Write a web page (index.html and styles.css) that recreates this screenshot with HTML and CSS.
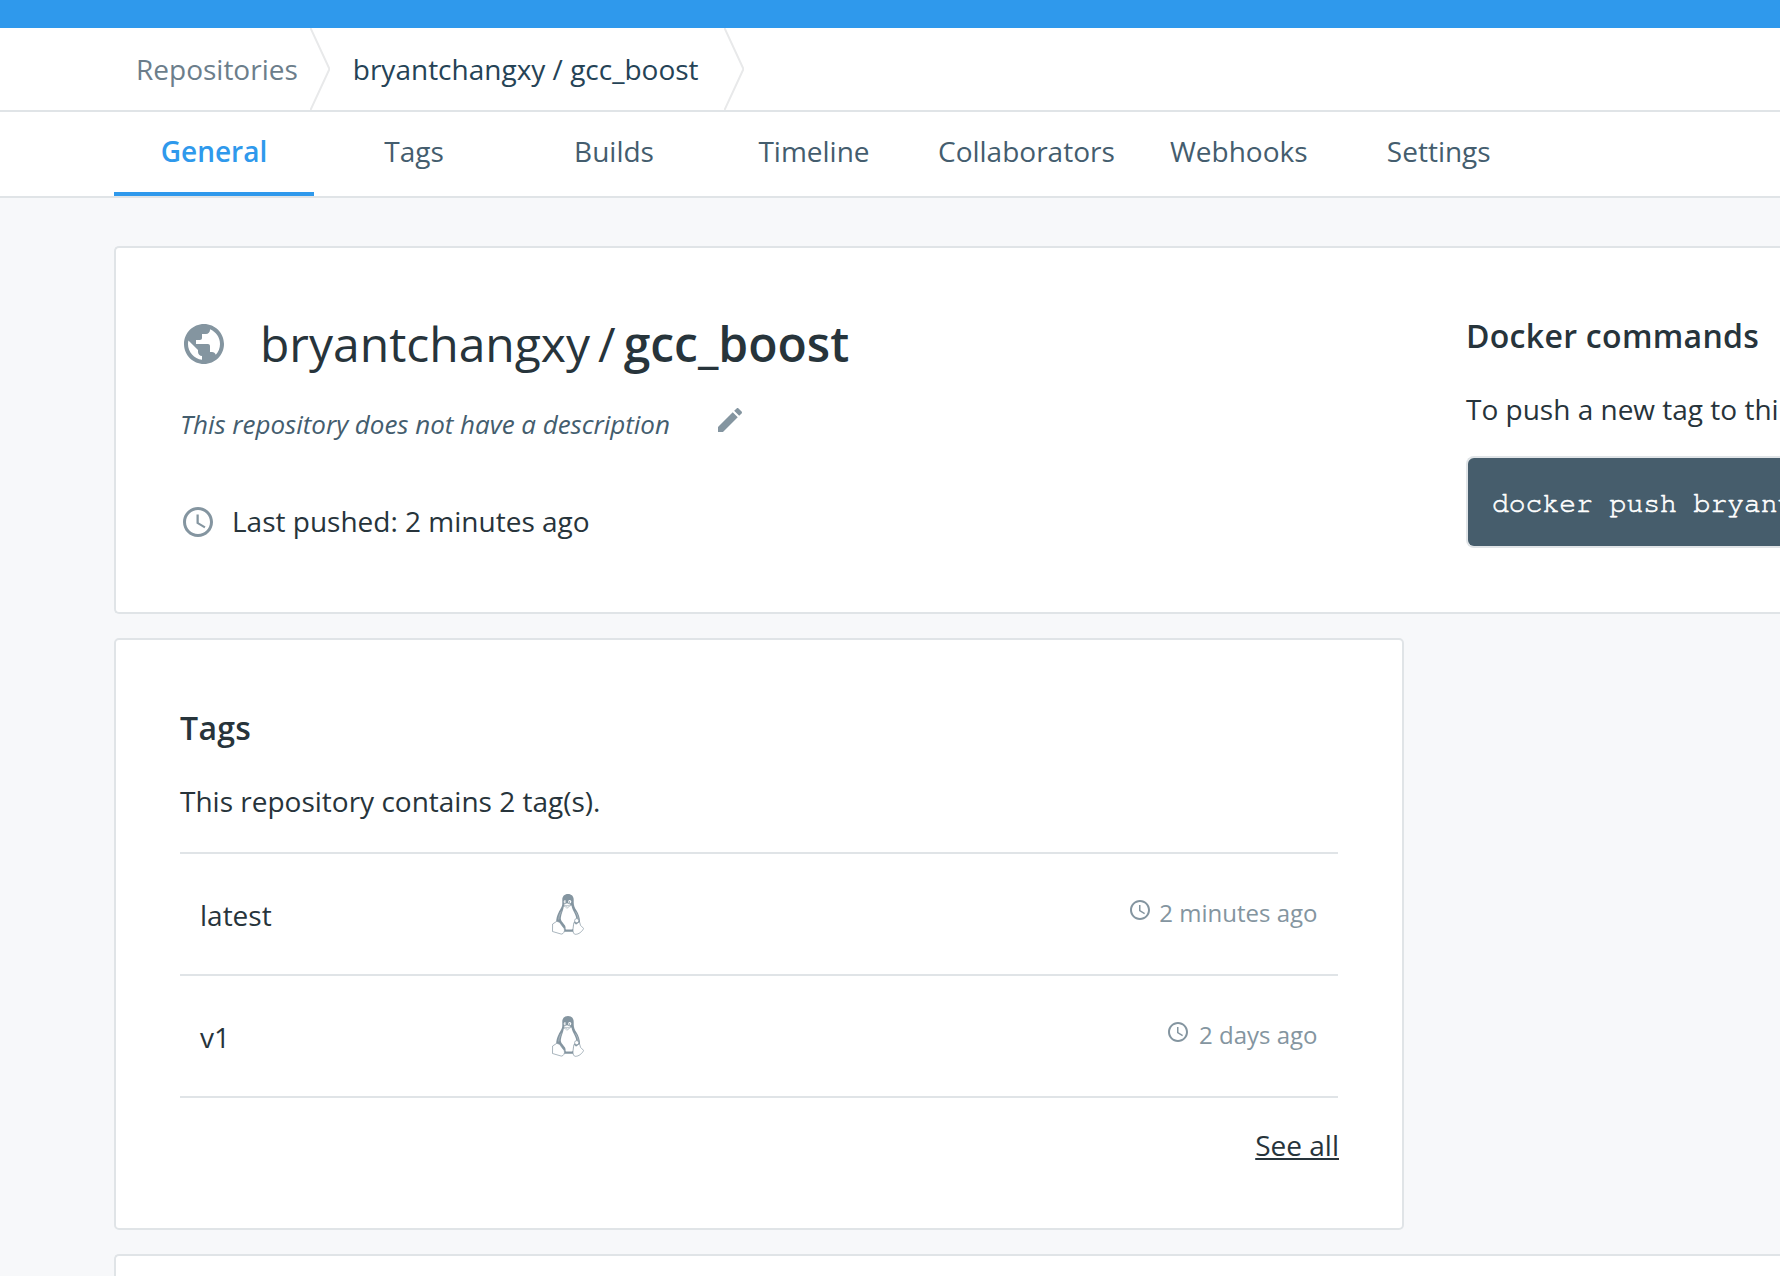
FILE: index.html
```html
<!DOCTYPE html>
<html lang="en">
<head>
<meta charset="utf-8">
<title>bryantchangxy / gcc_boost</title>
<link rel="stylesheet" href="styles.css">
</head>
<body>
<svg class="sprite" aria-hidden="true">
  <symbol id="clock" viewBox="0 0 24 24"><path d="M11.99 2C6.47 2 2 6.48 2 12s4.47 10 9.99 10C17.52 22 22 17.52 22 12S17.52 2 11.99 2zM12 20c-4.42 0-8-3.58-8-8s3.58-8 8-8 8 3.58 8 8-3.58 8-8 8zm.5-13H11v6l5.25 3.15.75-1.23-4.5-2.67z"/></symbol>
  <symbol id="tux" viewBox="0 0 32 42">
    <path d="M16 1C12.400 1 10.300 3.300 10.300 6.800V10.500C10.300 14 8.500 15.500 6.600 19.500C5.100 22.700 4.200 25.500 4.200 28.800L12 38.700H21L28 29C28.200 25 26.500 20.500 24.500 17.500C22.500 14.500 21.800 12.500 21.700 9.500V6.800C21.700 3.300 19.600 1 16 1z"/>
    <path class="tux-light" d="M11.800 13.500C11.300 17.500 9.300 20.500 8.800 25C8.600 28 11 29.500 13 32.500C14.200 34.500 13 36.200 14 36.500H20.300C21.600 36 21.200 31 22.500 28.500C23.300 27.200 24.400 27.500 24.300 25.500C23.800 21 20.500 17.800 19.500 12.500z"/>
    <path class="tux-gap" d="M9.300 18.500C7.600 21.300 6.900 23.700 6.700 26.500M23.300 18.500C25.300 21.500 26 23.500 26.200 26"/>
    <ellipse class="tux-light" cx="12.900" cy="8.800" rx="1.200" ry="1.600"/>
    <ellipse class="tux-light" cx="17.700" cy="8.800" rx="1.600" ry="1.800"/>
    <circle cx="13.200" cy="9" r=".7"/><circle cx="17.400" cy="9" r=".8"/>
    <path class="tux-beak" d="M11.600 11.500L15 10L18.700 11.500L15.300 14.200zM11.800 12.500L15 15.400L18.700 12.600"/>
    <path class="tux-line" d="M4.800 28.300L7.500 29.300L12.300 35.700C13 38 11.800 41 9.300 41.100L.5 38.500L.6 31z"/>
    <path class="tux-line" d="M22 29.300L24 31.200L27.500 28.700L28.500 32.300L31.600 35.400C30.300 38.500 26.700 41.500 23.200 41.300C20.300 40.700 20.700 36 22 29.300z"/>
    <circle class="tux-line" cx="24.700" cy="27.700" r="2.100"/>
  </symbol>
</svg>

<div class="topbar"></div>
<nav class="breadcrumbs">
  <a class="crumb">Repositories</a>
  <svg class="chevron" viewBox="0 0 20 82"><path d="M.5 0L19.500 41L.5 82"/></svg>
  <a class="crumb crumb-current">bryantchangxy / gcc_boost</a>
  <svg class="chevron" viewBox="0 0 20 82"><path d="M.5 0L19.500 41L.5 82"/></svg>
</nav>
<nav class="tabs">
  <a class="tab tab-active">General</a>
  <a class="tab">Tags</a>
  <a class="tab">Builds</a>
  <a class="tab">Timeline</a>
  <a class="tab">Collaborators</a>
  <a class="tab">Webhooks</a>
  <a class="tab">Settings</a>
</nav>

<main class="content">
  <section class="card overview">
    <div class="summary">
      <h1 class="repo-title">
        <svg class="icon globe" viewBox="0 0 24 24"><path d="M12 2C6.480 2 2 6.480 2 12s4.480 10 10 10 10-4.480 10-10S17.520 2 12 2zm-1 17.930c-3.950-.49-7-3.850-7-7.930 0-.62.080-1.210.210-1.790L9 15v1c0 1.100.9 2 2 2v1.930zm6.900-2.540c-.26-.81-1-1.390-1.900-1.390h-1v-3c0-.55-.45-1-1-1H8v-2h2c.55 0 1-.45 1-1V7h2c1.100 0 2-.9 2-2v-.41c2.930 1.190 5 4.060 5 7.410 0 2.080-.8 3.970-2.100 5.390z"/></svg>
        <span>bryantchangxy</span><span class="slash">/</span><strong class="repo-name">gcc_boost</strong>
      </h1>
      <p class="description"><em>This repository does not have a description</em>
        <svg class="icon pencil" viewBox="0 0 24 24"><path d="M3 17.250V21h3.750L17.810 9.940l-3.750-3.750L3 17.250zM20.710 7.040c.39-.39.39-1.020 0-1.410l-2.340-2.340c-.39-.39-1.020-.39-1.410 0l-1.830 1.830 3.750 3.750 1.830-1.830z"/></svg>
      </p>
      <p class="pushed"><svg class="icon pushed-icon"><use href="#clock"/></svg>Last pushed: 2 minutes ago</p>
    </div>
    <div class="commands">
      <h2 class="heading">Docker commands</h2>
      <p class="text">To push a new tag to thi</p>
      <pre class="code">docker push bryant</pre>
    </div>
  </section>

  <section class="card tags-card">
    <h2 class="heading">Tags</h2>
    <p class="text">This repository contains 2 tag(s).</p>
    <div class="tag-list">
      <div class="tag-row">
        <span class="tag-name">latest</span>
        <svg class="icon tux"><use href="#tux"/></svg>
        <span class="tag-time"><svg class="icon time-icon"><use href="#clock"/></svg>2 minutes ago</span>
      </div>
      <div class="tag-row">
        <span class="tag-name">v1</span>
        <svg class="icon tux"><use href="#tux"/></svg>
        <span class="tag-time tag-time-days"><svg class="icon time-icon"><use href="#clock"/></svg>2 days ago</span>
      </div>
    </div>
    <a class="see-all">See all</a>
  </section>

  <section class="card readme"></section>
</main>
</body>
</html>
```

FILE: styles.css
```css
* { box-sizing: border-box; }

body {
  margin: 0;
  height: 1276px;
  overflow: hidden;
  background: #f7f8fa;
  color: #27343b;
  font: 28px/38px "Open Sans", sans-serif;
}

h1, h2, p, pre { margin: 0; }

.sprite { display: none; }
.icon { display: block; flex: none; fill: #8495a0; }

.topbar { height: 28px; background: #2f99ec; }

.breadcrumbs {
  display: flex;
  align-items: center;
  height: 84px;
  padding-left: 136px;
  background: #fff;
  border-bottom: 2px solid #e0e4e7;
}
.crumb { color: #6c7e8b; white-space: nowrap; }
.crumb-current { margin-left: 23px; color: #254356; }
.chevron {
  flex: none;
  width: 20px;
  height: 82px;
  margin-left: 12px;
  fill: none;
  stroke: #e8e9ea;
  stroke-width: 2;
}
.crumb-current + .chevron { margin-left: 25px; }

.tabs {
  display: flex;
  height: 86px;
  padding-left: 114px;
  background: #fff;
  border-bottom: 2px solid #e0e4e7;
}
.tab {
  min-width: 200px;
  padding: 0 24px 2px;
  border-bottom: 4px solid transparent;
  color: #445d6e;
  line-height: 78px;
  text-align: center;
}
.tab-active { border-color: #2f99ec; color: #2f99ec; font-weight: 600; }

.content {
  display: flex;
  flex-direction: column;
  gap: 24px;
  height: 1078px;
  overflow: hidden;
  padding: 48px 0 0 114px;
}
.card {
  flex: none;
  background: #fff;
  border: 2px solid #e0e4e7;
  border-radius: 5px;
  padding: 64px;
}

.overview {
  display: grid;
  grid-template-columns: 1286px 1fr;
  height: 368px;
  padding-right: 0;
  border-right: 0;
  border-radius: 5px 0 0 5px;
}
.repo-title {
  display: flex;
  align-items: center;
  font-size: 48px;
  font-weight: 400;
  line-height: 64px;
}
.globe { width: 48px; height: 48px; margin-right: 32px; }
.slash { margin: 0 8px 0 8px; }
.repo-name { font-weight: 600; }
.description {
  display: flex;
  gap: 44px;
  margin-top: 30px;
  color: #445d6e;
  font-size: 26px;
  line-height: 36px;
  letter-spacing: -.03px;
}
.pencil { width: 32px; height: 32px; margin-top: -2px; }
.pushed { display: flex; align-items: center; margin-top: 60px; }
.pushed-icon { width: 36px; height: 36px; margin: 2px 16px 0 0; }

.heading {
  font-size: 32px;
  font-weight: 600;
  line-height: 48px;
  letter-spacing: .3px;
}
.text { margin-top: 30px; white-space: nowrap; }
.code {
  height: 92px;
  margin-top: 28px;
  padding: 2px 0 0 24px;
  overflow: hidden;
  background: #465d6c;
  border: 2px solid #e0e4e7;
  border-right: 0;
  border-radius: 8px 0 0 8px;
  color: #fff;
  font: 28px/88px "Courier 10 Pitch", "Nimbus Mono PS", FreeMono, "Liberation Mono", monospace;
  -webkit-text-stroke: .6px #fff;
}

.tags-card { width: 1290px; height: 592px; }
.tag-list { margin-top: 32px; border-top: 2px solid #e0e4e7; }
.tag-row {
  display: grid;
  grid-template-columns: 352px 32px 1fr;
  align-items: center;
  height: 122px;
  padding: 0 20px;
  border-bottom: 2px solid #e0e4e7;
}
.tag-name { padding-top: 2px; }
.tux { width: 32px; height: 42px; }
.tux-light { fill: #fff; }
.tux-line { fill: #fff; stroke: #8495a0; stroke-width: .7; }
.tux-beak { fill: #fff; stroke: #8495a0; stroke-width: .4; }
.tux-gap { fill: none; stroke: #fff; stroke-width: .3; }
.tag-time {
  display: flex;
  justify-content: flex-end;
  padding: 0 .5px 2px 0;
  color: #8495a0;
  font-size: 24px;
}
.time-icon { width: 24px; height: 24px; margin: 4px 7px 0 0; }
.tag-time-days .time-icon { margin-right: 9px; }
.see-all {
  display: block;
  width: max-content;
  margin: 28px -1px 0 auto;
  text-decoration: underline;
}

.readme {
  height: 100px;
  border-right: 0;
  border-radius: 5px 0 0 0;
}
```
